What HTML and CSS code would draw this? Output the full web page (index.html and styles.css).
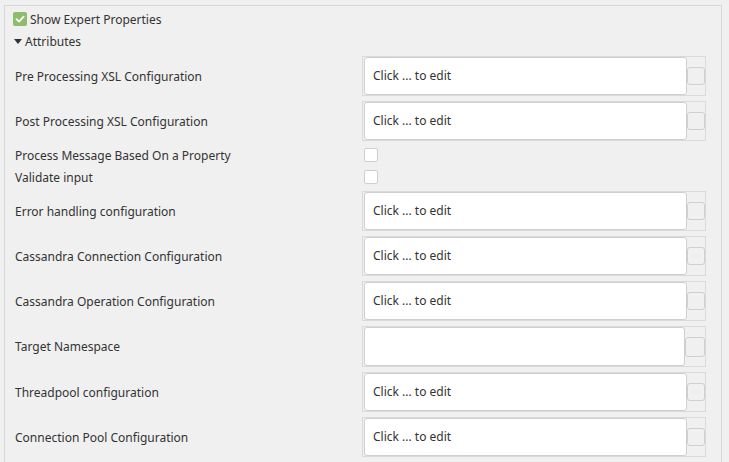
FILE: index.html
```html
<!DOCTYPE html>
<html>
<head>
<meta charset="utf-8">
<link rel="stylesheet" href="styles.css">
</head>
<body>
<div class="panel">
  <div class="expert">
    <span class="gcheck"><svg width="14" height="14" viewBox="0 0 14 14"><path d="M3.5 7.2 L6 9.6 L10.6 4.6" fill="none" stroke="#fff" stroke-width="1.8" stroke-linecap="round" stroke-linejoin="round"/></svg></span>
    <span>Show Expert Properties</span>
  </div>
  <div class="section">
    <span class="tri"></span>
    <span>Attributes</span>
  </div>
  <div class="rows">
    <div class="row"><div class="label">Pre Processing XSL Configuration</div><div class="frame"><div class="input">Click ... to edit</div><div class="btn"></div></div></div>
    <div class="row"><div class="label">Post Processing XSL Configuration</div><div class="frame"><div class="input">Click ... to edit</div><div class="btn"></div></div></div>
    <div class="checks">
      <div class="crow"><div class="label">Process Message Based On a Property</div><span class="cbox"></span></div>
      <div class="crow"><div class="label">Validate input</div><span class="cbox"></span></div>
    </div>
    <div class="row"><div class="label">Error handling configuration</div><div class="frame"><div class="input">Click ... to edit</div><div class="btn"></div></div></div>
    <div class="row"><div class="label">Cassandra Connection Configuration</div><div class="frame"><div class="input">Click ... to edit</div><div class="btn"></div></div></div>
    <div class="row"><div class="label">Cassandra Operation Configuration</div><div class="frame"><div class="input">Click ... to edit</div><div class="btn"></div></div></div>
    <div class="row tall"><div class="label">Target Namespace</div><div class="frame"><div class="input"></div><div class="btn"></div></div></div>
    <div class="row"><div class="label">Threadpool configuration</div><div class="frame"><div class="input">Click ... to edit</div><div class="btn"></div></div></div>
    <div class="row"><div class="label">Connection Pool Configuration</div><div class="frame"><div class="input">Click ... to edit</div><div class="btn"></div></div></div>
  </div>
</div>
</body>
</html>
```
FILE: styles.css
```css
html, body {
  margin: 0;
  padding: 0;
  background: #f0f0f0;
  font-family: "Noto Sans", "Open Sans", sans-serif;
  font-size: 12px;
  color: #333;
  overflow: hidden;
}
.panel {
  margin: 5px 0 0 4px;
  width: 718px;
  height: 470px;
  border-top: 1px solid #d8d8d8;
  border-left: 1px solid #d8d8d8;
  border-right: 1px solid #d8d8d8;
  box-sizing: border-box;
  padding: 6px 0 0 8px;
}
.expert {
  display: flex;
  align-items: center;
  height: 14px;
  gap: 3px;
}
.gcheck {
  width: 14px;
  height: 14px;
  border-radius: 2px;
  background: #8dbd6b;
  display: block;
}
.gcheck svg { display: block; }
.section {
  display: flex;
  align-items: center;
  height: 16px;
  margin-top: 7px;
  gap: 3px;
  padding-left: 1px;
}
.tri {
  width: 0;
  height: 0;
  border-left: 4.5px solid transparent;
  border-right: 4.5px solid transparent;
  border-top: 5px solid #333;
  display: block;
}
.rows {
  margin-top: 0;
  padding-top: 2px;
  padding-left: 2px;
}
.row {
  display: flex;
  align-items: center;
  height: 40px;
  margin-top: 5px;
}
.row.tall { height: 41px; }
.label {
  width: 347px;
  white-space: nowrap;
}
.frame {
  box-sizing: border-box;
  width: 344px;
  height: 100%;
  border: 1px solid #dadada;
  padding-left: 1px;
  display: flex;
  align-items: center;
}
.input {
  box-sizing: border-box;
  width: 323px;
  height: 38px;
  background: #fff;
  border: 1px solid #cfcfcf;
  border-radius: 3px;
  padding-left: 8px;
  line-height: 35px;
}
.btn {
  box-sizing: border-box;
  width: 18px;
  height: 18px;
  border: 1px solid #cfcfcf;
  border-radius: 3px;
  background: #f0f0f0;
  margin-left: 0;
}
.row.tall .input { width: 321px; height: 39px; }
.row.tall .btn { width: 20px; height: 20px; }
.checks {
  margin: 3px 0 -2px;
}
.crow {
  display: flex;
  align-items: center;
  height: 22px;
}
.cbox {
  box-sizing: border-box;
  width: 14px;
  height: 14px;
  border: 1px solid #cfcfcf;
  border-radius: 2px;
  background: #fff;
  margin-left: 2px;
}
```
